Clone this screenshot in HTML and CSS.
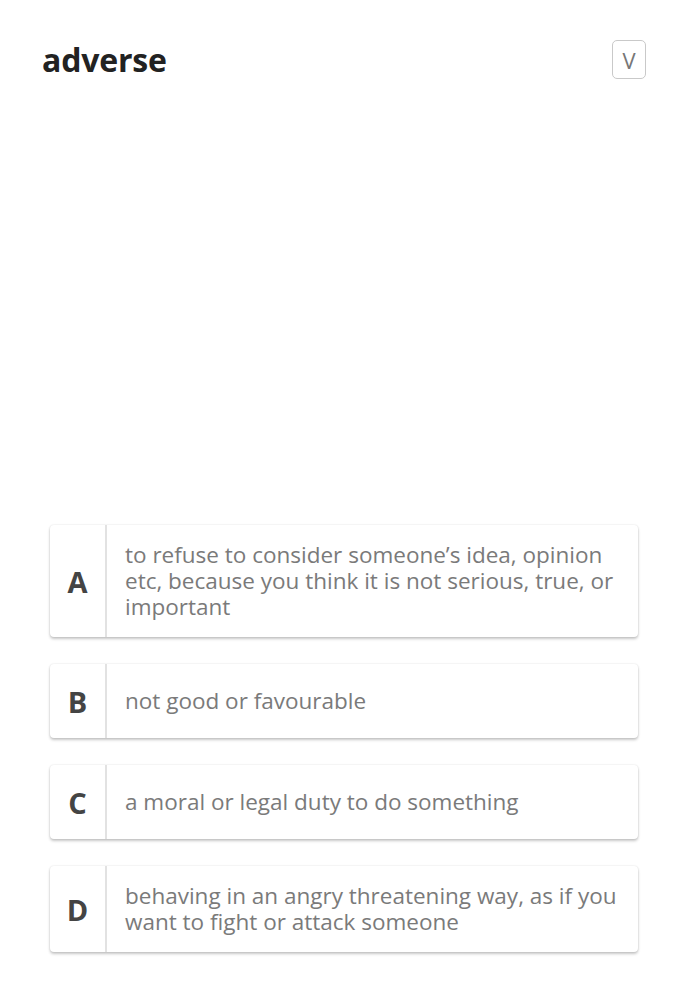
FILE: index.html
```html
<!DOCTYPE html>
<html lang="en">
<head>
<meta charset="utf-8">
<title>adverse</title>
<link rel="stylesheet" href="styles.css">
</head>
<body>
<div class="page">
  <header class="header">
    <h1 class="word">adverse</h1>
    <div class="badge">V</div>
  </header>
  <main class="options">
    <div class="card card-a">
      <div class="letter">A</div>
      <div class="text">to refuse to consider someone’s idea, opinion etc, because you think it is not serious, true, or important</div>
    </div>
    <div class="card">
      <div class="letter">B</div>
      <div class="text">not good or favourable</div>
    </div>
    <div class="card">
      <div class="letter">C</div>
      <div class="text">a moral or legal duty to do something</div>
    </div>
    <div class="card">
      <div class="letter">D</div>
      <div class="text">behaving in an angry threatening way, as if you want to fight or attack someone</div>
    </div>
  </main>
</div>
</body>
</html>
```

FILE: styles.css
```css
* { box-sizing: border-box; }
html, body { margin: 0; padding: 0; background: #fff; }
body { font-family: "Open Sans", "Noto Sans", sans-serif; }
.page {
  height: 984px;
  display: flex;
  flex-direction: column;
}
.header {
  display: flex;
  justify-content: space-between;
  align-items: flex-start;
  padding: 40px 46px 0 42px;
}
.word {
  margin: 0;
  font-size: 32px;
  font-weight: 700;
  color: #222;
  line-height: 40px;
  letter-spacing: -0.2px;
}
.badge {
  width: 34px;
  height: 39px;
  border: 1.5px solid #c9c9c9;
  border-radius: 5px;
  display: flex;
  align-items: center;
  justify-content: center;
  font-size: 22px;
  color: #777;
}
.options {
  margin-top: auto;
  padding: 0 54px 32px 50px;
  display: flex;
  flex-direction: column;
  gap: 27px;
}
.card {
  display: flex;
  min-height: 74px;
  background: #fff;
  border-radius: 4px;
  box-shadow: 0 0 2px rgba(0,0,0,0.12), 0 2px 3px rgba(0,0,0,0.22);
}
.letter {
  width: 57px;
  flex: none;
  display: flex;
  align-items: center;
  justify-content: center;
  font-size: 29px;
  font-weight: 700;
  color: #444;
  border-right: 2px solid #e2e2e2;
}
.text {
  flex: 1;
  display: flex;
  align-items: center;
  padding: 17px 18px 17px 18px;
  font-size: 22.5px;
  line-height: 26px;
  color: #7a7a7a;
}
```
